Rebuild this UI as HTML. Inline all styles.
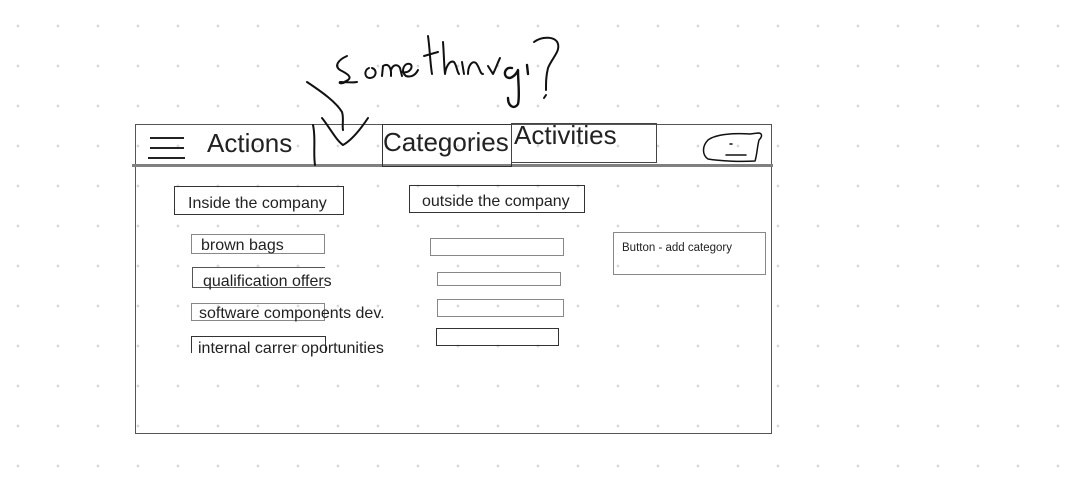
<!DOCTYPE html>
<html><head><meta charset="utf-8"><style>
html,body{margin:0;padding:0}
body{width:1075px;height:501px;position:relative;overflow:hidden;background:#fff;
background-image:radial-gradient(circle,#d8d8d8 1.2px,transparent 1.6px);
background-size:40px 40px;background-position:-2px 6px;
font-family:"Liberation Sans",Arial,sans-serif;color:#222}
.a{position:absolute;box-sizing:border-box}
.b{border:1px solid #333}
.g{border:1px solid #888}
.t{position:absolute;white-space:nowrap;color:#222;line-height:1.15}
.L{font-size:26px}
.s{font-size:16px}
</style></head><body>
<div class="a" style="left:135px;top:124px;width:637px;height:310px;border:1px solid #555"></div>
<div class="a" style="left:132px;top:164px;width:641px;height:3px;background:#808080"></div>
<div class="a b" style="left:382px;top:124px;width:130px;height:43px"></div>
<div class="a b" style="left:511px;top:123px;width:146px;height:40px;border-color:#444"></div>
<div class="t L" style="left:207px;top:129px">Actions</div>
<div class="t L" style="left:383px;top:128px">Categories</div>
<div class="t L" style="left:514px;top:121px">Activities</div>
<div class="a" style="left:150px;top:137px;width:34px;height:2px;background:#222"></div>
<div class="a" style="left:150px;top:147px;width:34px;height:2px;background:#222"></div>
<div class="a" style="left:148px;top:157px;width:37px;height:2px;background:#222"></div>
<svg class="a" style="left:0;top:0" width="1075" height="501" viewBox="0 0 1075 501" fill="none" stroke="#111" stroke-width="2" stroke-linecap="round" stroke-linejoin="round">
<path d="M313 125 C316 138 313 152 315 165"/>
<path d="M307 82 C322 92 336 102 342 112 C344 118 342 125 343 130 M322 118 C330 128 336 140 343 145 C352 140 360 130 368 118"/>
<path d="M347 56 C338 60 334 66 340 70 C348 74 352 77 348 80 C344 84 338 84 340 82 C344 82 352 83 357 82"/>
<path d="M369 68 C364 70 364 78 370 78 C376 78 378 70 372 68"/>
<path d="M382 76 L383 66 C386 64 390 64 391 72 L391 76 M391 70 C393 64 398 64 400 68 L402 76"/>
<path d="M402 72 C410 74 414 66 410 64 C404 62 400 72 406 76 C412 78 416 74 418 70"/>
<path d="M428 36 C430 50 430 62 432 74 M424 56 L438 52"/>
<path d="M443 42 C444 55 444 65 445 74 C446 66 450 60 454 62 C457 66 457 72 459 74"/>
<path d="M462 62 L464 74"/>
<path d="M468 74 C468 66 472 60 476 63 C480 68 480 74 483 74"/>
<path d="M488 66 L493 74 C496 68 498 62 500 58"/>
<path d="M512 68 C504 66 502 78 510 78 C516 76 518 70 518 70 C518 82 520 96 518 104 C514 110 508 106 508 98 M527 65 L528 74" stroke-width="2.4"/>
<path d="M534 42 C542 36 556 36 558 44 C560 52 552 58 548 68 C546 76 546 82 546 90 M546 95 L544 98"/>
<path d="M708 140 C716 134 734 133 750 134 L758 133 C762 133 763 136 759 140 C757 148 757 155 755 161 C740 162 720 161 708 159 C702 155 702 146 708 140 Z" stroke-width="1.5"/>
<path d="M726 155 L746 155 M730 144 L732 144" stroke-width="1.5"/>
</svg>
<span class="t" style="left:335px;top:45px;font-size:30px;color:transparent">something?</span>
<div class="a b" style="left:174px;top:186px;width:170px;height:29px"></div>
<div class="t s" style="left:188px;top:195px">Inside the company</div>
<div class="a b" style="left:409px;top:185px;width:176px;height:28px"></div>
<div class="t s" style="left:422px;top:193px">outside the company</div>
<div class="a g" style="left:191px;top:234px;width:134px;height:20px"></div>
<div class="t s" style="left:201px;top:237px">brown bags</div>
<div class="a" style="left:192px;top:267px;width:133px;height:21px;border-top:1px solid #555;border-left:1px solid #555;border-bottom:1px solid #555"></div>
<div class="t s" style="left:203px;top:273px">qualification offers</div>
<div class="a g" style="left:191px;top:303px;width:134px;height:18px"></div>
<div class="t s" style="left:199px;top:305px">software components dev.</div>
<div class="a" style="left:191px;top:336px;width:135px;height:17px;border-top:1px solid #333;border-left:1px solid #333;border-right:1px solid #333"></div>
<div class="t s" style="left:198px;top:340px">internal carrer oportunities</div>
<div class="a g" style="left:430px;top:238px;width:134px;height:18px"></div>
<div class="a g" style="left:437px;top:272px;width:124px;height:14px"></div>
<div class="a g" style="left:437px;top:299px;width:127px;height:18px"></div>
<div class="a b" style="left:436px;top:328px;width:123px;height:18px"></div>
<div class="a g" style="left:613px;top:232px;width:153px;height:43px"></div>
<div class="t" style="left:622px;top:242px;font-size:11.5px">Button - add category</div>
</body></html>
